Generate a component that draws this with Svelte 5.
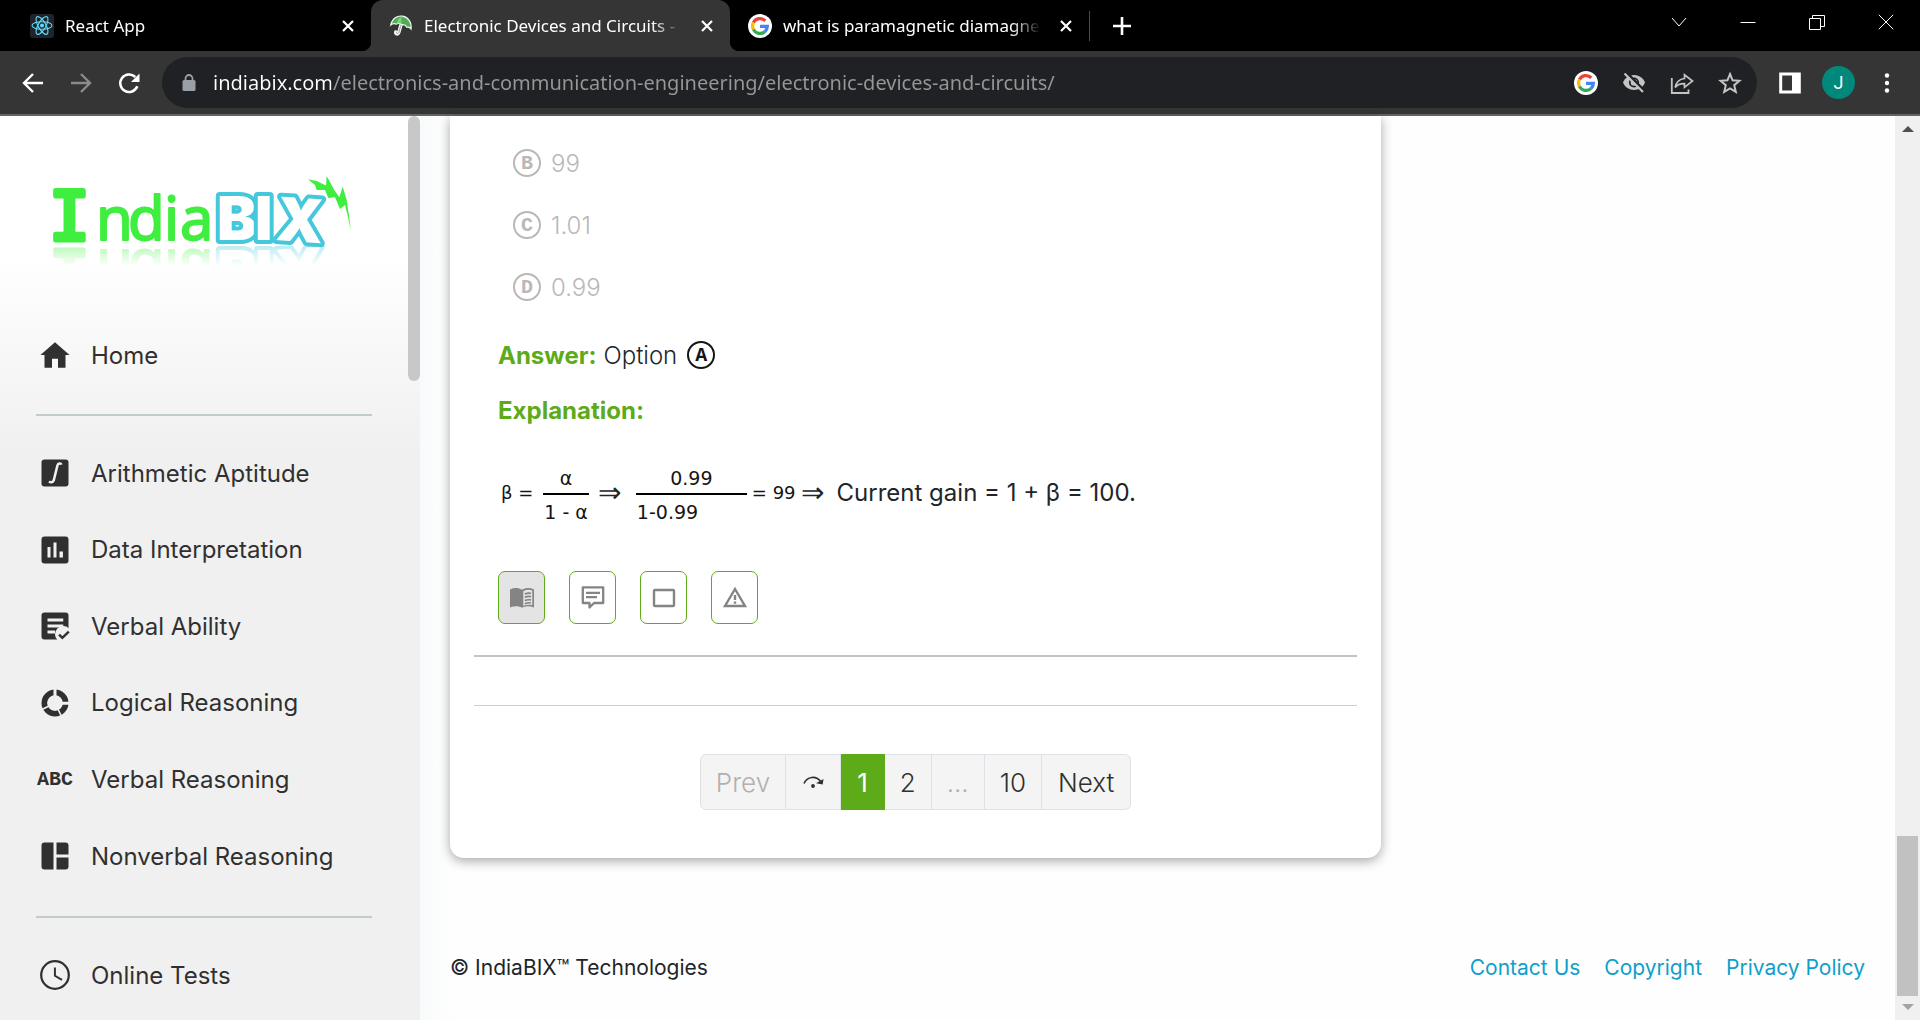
<script>
  const tabs = [
    { icon: 'react', title: 'React App', active: false },
    { icon: 'umbrella', title: 'Electronic Devices and Circuits -', active: true },
    { icon: 'google', title: 'what is paramagnetic diamagnet', active: false },
  ];
  const topics = [
    { icon: 'integral', label: 'Arithmetic Aptitude' },
    { icon: 'chart', label: 'Data Interpretation' },
    { icon: 'check', label: 'Verbal Ability' },
    { icon: 'donut', label: 'Logical Reasoning' },
    { icon: 'abc', label: 'Verbal Reasoning' },
    { icon: 'board', label: 'Nonverbal Reasoning' },
  ];
  const options = [
    { letter: 'B', text: '99' },
    { letter: 'C', text: '1.01' },
    { letter: 'D', text: '0.99' },
  ];
  let address = $state('indiabix.com/electronics-and-communication-engineering/electronic-devices-and-circuits/');
</script>

{#snippet google()}
  <svg class="i24" viewBox="0 0 24 24" aria-hidden="true">
    <circle cx="12" cy="12" r="12" fill="#fff" />
    <g fill="none" stroke-width="3.2">
      <path d="M5.4 8.6A7.4 7.4 0 0 1 17.3 6.8" stroke="#ea4335" />
      <path d="M5.4 15.4A7.4 7.4 0 0 1 5.4 8.6" stroke="#fbbc05" />
      <path d="M17 17.5A7.4 7.4 0 0 1 5.4 15.4" stroke="#34a853" />
      <path d="M12 12.3h7.4a7.4 7.4 0 0 1-2.4 5.2" stroke="#4285f4" />
    </g>
  </svg>
{/snippet}

{#snippet cross()}
  <svg class="i14" viewBox="0 0 14 14" aria-hidden="true"><path d="M2 2l10 10M12 2L2 12" fill="none" stroke="#fff" stroke-width="2.200" /></svg>
{/snippet}

{#snippet topicIcon(name)}
  {#if name === 'abc'}
    <span class="abc" aria-hidden="true">ABC</span>
  {:else}
    <svg class="i36" viewBox="0 0 24 24" aria-hidden="true" fill="#303030">
      {#if name === 'home'}
        <path d="M10 20.500v-6h4v6h5v-8.500h2.700L12 3.500 2.300 12H5v8.500z" />
      {:else if name === 'integral'}
        <rect x="3" y="3" width="18" height="18" rx="2" />
        <path d="M16.300 6.400c-.4-1-2.200-1.100-2.700.6L11.200 16.800c-.5 1.600-2.200 1.600-3.200.8" fill="none" stroke="#f0f0f0" stroke-width="1.700" />
      {:else if name === 'chart'}
        <path d="M19 3H5a2 2 0 0 0-2 2v14a2 2 0 0 0 2 2h14a2 2 0 0 0 2-2V5a2 2 0 0 0-2-2M9 17H7v-7h2zm4 0h-2V7h2zm4.300 0h-2.300v-4h2.300z" fill-rule="evenodd" />
      {:else if name === 'check'}
        <rect x="3" y="3" width="18" height="18" rx="2" />
        <path d="M7 8h10.500M7 12h10.500M7 16h5" stroke="#f0f0f0" stroke-width="2" />
        <circle cx="17.500" cy="17.500" r="5.500" fill="#f0f0f0" />
        <path d="M14.700 17.700l2.200 2.200 4.300-4.200" fill="none" stroke="#303030" stroke-width="1.600" />
      {:else if name === 'donut'}
        <circle cx="12" cy="12" r="7.100" fill="none" stroke="#303030" stroke-width="3.800" />
        <path d="M12 12V2M12 12.200h10" stroke="#f0f0f0" stroke-width="2" />
        <path d="M12 12l4.600 9.500M12 12l-9 4.500" stroke="#f0f0f0" stroke-width="1.100" />
        <circle cx="12" cy="12" r="5" fill="#f0f0f0" />
      {:else if name === 'board'}
        <path d="M5 3h6v18H5a2 2 0 0 1-2-2V5a2 2 0 0 1 2-2M13 3h6a2 2 0 0 1 2 2v6h-8zM13 13h8v6a2 2 0 0 1-2 2h-6z" />
      {:else if name === 'clock'}
        <circle cx="12" cy="12" r="9.200" fill="none" stroke="#303030" stroke-width="1.500" />
        <path d="M11.300 7h1.300v5.200l4.400 2.500-.7 1.100-5-2.900z" />
      {/if}
    </svg>
  {/if}
{/snippet}

<div class="window">
  <div class="tabstrip">
    <div class="tabs">
      {#each tabs as tab}
        <div class="tab" class:active={tab.active}>
          {#if tab.icon === 'react'}
            <svg class="i24" viewBox="0 0 24 24" aria-hidden="true">
              <rect width="24" height="24" rx="3" fill="#20232a" />
              <g fill="none" stroke="#61dafb" stroke-width="1.100">
                <ellipse cx="12" cy="11.500" rx="10" ry="3.800" />
                <ellipse cx="12" cy="11.500" rx="10" ry="3.800" transform="rotate(60 12 11.500)" />
                <ellipse cx="12" cy="11.500" rx="10" ry="3.800" transform="rotate(120 12 11.500)" />
              </g>
              <circle cx="12" cy="11.500" r="2" fill="#61dafb" />
            </svg>
          {:else if tab.icon === 'umbrella'}
            <svg class="i24" viewBox="0 0 24 24" aria-hidden="true">
              <path d="M12.500 9L9.800 18.500c-.9 2.400-3.800 1.600-3.100-.6" fill="none" stroke="#f4f4f4" stroke-width="3.400" stroke-linecap="round" />
              <path d="M12.600 9L9.800 18.500c-.7 1.600-2.600 1.200-2.300-.4" fill="none" stroke="#9aa59a" stroke-width="1" />
              <path d="M1.800 11C3 4.500 8.500 1.200 13.500 2.200 19.500 3.300 23 8.500 22 15c-1-1.600-2.600-2.200-4.200-1.700-1-2-2.700-3-4.700-2.700-1.900-1.500-3.900-1.600-5.800-.5-1.800-.8-3.900-.5-5.500.9z" fill="#4caf50" stroke="#f4f4f4" stroke-width="1.200" />
              <path d="M7.300 10C8 6 10.500 3.500 13.200 2.800c-1.300 2.700-1.200 5-.1 7.800-1.900-1.500-3.900-1.700-5.800-.6z" fill="#7fd07f" />
            </svg>
          {:else}
            {@render google()}
          {/if}
          <span class="title">{tab.title}</span>
          <button class="plain" aria-label="Close tab">{@render cross()}</button>
        </div>
      {/each}
      <span class="tabsep"></span>
      <button class="plain newtab" aria-label="New tab">
        <svg class="i20" viewBox="0 0 20 20" aria-hidden="true"><path d="M10 1v18M1 10h18" stroke="#fff" stroke-width="2.600" /></svg>
      </button>
    </div>
    <div class="controls">
      <button class="plain" aria-label="Search tabs"><svg class="i16" viewBox="0 0 16 16" aria-hidden="true"><path d="M1 4l7 8 7-8" /></svg></button>
      <button class="plain" aria-label="Minimize"><svg class="i16" viewBox="0 0 16 16" aria-hidden="true"><path d="M.5 8.500h15" /></svg></button>
      <button class="plain" aria-label="Restore"><svg class="i16" viewBox="0 0 16 16" aria-hidden="true"><path d="M.5 4.500h11v11H.5zM3.500 4.500v-3h12v11h-4" /></svg></button>
      <button class="plain" aria-label="Close"><svg class="i16" viewBox="0 0 16 16" aria-hidden="true"><path d="M.8.8l14.400 14.400M15.200.8L.8 15.200" /></svg></button>
    </div>
  </div>

  <div class="toolbar">
    <button class="plain" aria-label="Back"><svg class="i24" viewBox="0 0 24 24" aria-hidden="true"><path d="M22 12H3.500M12 3l-9 9 9 9" fill="none" stroke="#fff" stroke-width="2.400" /></svg></button>
    <button class="plain" aria-label="Forward"><svg class="i24" viewBox="0 0 24 24" aria-hidden="true"><path d="M2 12h18.500M12 3l9 9-9 9" fill="none" stroke="#8b8b8b" stroke-width="2.400" /></svg></button>
    <button class="plain" aria-label="Reload"><svg class="i24" viewBox="0 0 24 24" aria-hidden="true"><path d="M20.300 15.300A8.800 8.800 0 1 1 18.300 6" fill="none" stroke="#fff" stroke-width="2.500" /><path d="M22.500 2.500v8.500H14z" fill="#fff" /></svg></button>
    <div class="omnibox">
      <svg class="i20" viewBox="0 0 20 20" aria-hidden="true"><rect x="3.500" y="7" width="13" height="11" rx="1.500" fill="#9aa0a6" /><path d="M6.500 8V5.500a3.500 3.500 0 0 1 7 0V8" fill="none" stroke="#9aa0a6" stroke-width="1.800" /></svg>
      <input aria-label="Address" bind:value={address} />
      <div class="actions">
        <button class="plain" aria-label="Google">{@render google()}</button>
        <button class="plain" aria-label="Tracking protection">
          <svg class="i24" viewBox="0 0 24 24" aria-hidden="true"><path d="M1 11.500C3 6.800 7.200 4 12 4s9 2.800 11 7.500C21 16.200 16.800 19 12 19S3 16.200 1 11.500z" fill="#c4c4c4" /><circle cx="12" cy="11.500" r="4.200" fill="none" stroke="#202124" stroke-width="1.800" /><path d="M4.500 1.500L22.500 20" stroke="#202124" stroke-width="2.600" /><path d="M2.500 2.500l18.500 18.500" stroke="#c4c4c4" stroke-width="2.200" /></svg>
        </button>
        <button class="plain" aria-label="Share">
          <svg class="i24" viewBox="0 0 24 24" aria-hidden="true"><path d="M1.800 7v15h16.700v-3.500" fill="none" stroke="#c4c4c4" stroke-width="1.800" /><path d="M14.500 7.500V3.800L22.500 10l-8 6.300v-3.600c-4-.1-7 .9-9.300 3.800C6 11.800 8.800 8.200 14.500 7.500z" fill="none" stroke="#c4c4c4" stroke-width="1.700" /></svg>
        </button>
        <button class="plain" aria-label="Bookmark">
          <svg class="i24" viewBox="0 0 24 24" aria-hidden="true"><path d="M12 3l2.600 6.300 6.800.5-5.200 4.400 1.600 6.600-5.800-3.500-5.800 3.500 1.600-6.600-5.200-4.400 6.800-.5z" fill="none" stroke="#c4c4c4" stroke-width="2" /></svg>
        </button>
      </div>
    </div>
    <button class="plain" aria-label="Side panel"><svg class="i24" viewBox="0 0 24 24" aria-hidden="true"><path d="M1.200 1.500h21.600v21H1.200zM4.200 4.500v15h9.800v-15z" fill="#fff" fill-rule="evenodd" /></svg></button>
    <button class="plain avatar" aria-label="Profile">J</button>
    <button class="plain" aria-label="Menu"><svg class="i24" viewBox="0 0 24 24" aria-hidden="true" fill="#fff"><circle cx="12" cy="4.500" r="2.200" /><circle cx="12" cy="12" r="2.200" /><circle cx="12" cy="19.500" r="2.200" /></svg></button>
  </div>

  <div class="page">
    <aside class="sidebar">
      <nav>
        <a class="logo" href="#home" aria-label="IndiaBIX">
          <svg viewBox="0 0 310 104" aria-hidden="true">
            <defs>
              <linearGradient id="fade" x1="0" y1="0" x2="0" y2="1">
                <stop offset="0" stop-color="#fff" stop-opacity="0.350" />
                <stop offset="1" stop-color="#fff" stop-opacity="0" />
              </linearGradient>
              <mask id="mirror"><rect x="0" y="76" width="310" height="20" fill="url(#fade)" /></mask>
              <g id="brand">
                <text class="hand" y="70"><tspan class="slab" x="1">I</tspan><tspan x="48">n</tspan><tspan x="80">d</tspan><tspan x="116">i</tspan><tspan x="132">a</tspan></text>
                <text class="block" y="70"><tspan x="169">B</tspan><tspan x="207">I</tspan><tspan x="227" rotate="4">X</tspan></text>
              </g>
            </defs>
            <use href="#brand" />
            <g mask="url(#mirror)"><use href="#brand" transform="matrix(1 0 0 -1 0 150)" /></g>
            <path d="M260 9.300L268.700 11 278 15.500 278.700 6 286.300 20 291.300 27.300 294.700 16.700 298.700 30 302 53 302.700 60 300 47 297 35 292 39 287 27.300 280.300 28 277 20 268.700 20 267 15z" fill="#3fee3f" />
          </svg>
        </a>
        <a class="item" href="#home">{@render topicIcon('home')}Home</a>
        <hr />
        <div class="group">
          {#each topics as topic}
            <a class="item" href="#topic">{@render topicIcon(topic.icon)}{topic.label}</a>
          {/each}
        </div>
        <hr />
        <a class="item" href="#tests">{@render topicIcon('clock')}Online Tests</a>
      </nav>
      <div class="sidebar-track"><div class="sidebar-thumb"></div></div>
    </aside>

    <main>
      <section class="card">
        <ul class="options">
          {#each options as option}
            <li><span class="ring">{option.letter}</span>{option.text}</li>
          {/each}
        </ul>
        <p class="answer"><strong>Answer:</strong> Option <span class="ring">A</span></p>
        <p class="explanation"><strong>Explanation:</strong></p>
        <div class="formula">
          <span class="math">β =</span>
          <span class="frac"><span>α</span><span>1 - α</span></span>
          <span class="arrow">⇒</span>
          <span class="frac wide"><span>0.99</span><span>1-0.99</span></span>
          <span class="math equals">= 99</span>
          <span class="arrow">⇒</span>
          <span class="result">Current gain = 1 + β = 100.</span>
        </div>
        <div class="tools">
          <button class="tool on" aria-label="View answer">
            <svg class="i26" viewBox="0 0 26 26" aria-hidden="true"><path d="M1 4.500C5 2.500 9.500 2.500 13 4.800c3.500-2.300 8-2.300 12-.3v18c-4-1.800-8.500-1.800-12 .2-3.500-2-8-2-12-.2z" fill="#848484" /><path d="M14.300 6.200c2.800-1.600 5.800-1.800 9-.8v14.800c-3.200-.8-6.200-.6-9 .7z" fill="#e4e4e4" /><path d="M15.800 9c2-.9 4-1.100 6.200-.7M15.800 12.300c2-.9 4-1.100 6.200-.7M15.800 15.600c2-.9 4-1.100 6.200-.7M15.800 18.700c2-.9 4-1.100 6.200-.7" fill="none" stroke="#848484" stroke-width="1.600" /></svg>
          </button>
          <button class="tool" aria-label="Discuss">
            <svg class="i26" viewBox="0 0 26 26" aria-hidden="true" fill="none" stroke="#848484" stroke-width="2.300"><path d="M2.800 2.300h20.400v15.700H14l-4.500 4.500V18H2.800z" stroke-linejoin="round" /><path d="M6 7.800h14M6 12.200h11" /></svg>
          </button>
          <button class="tool" aria-label="Workspace">
            <svg class="i26" viewBox="0 0 26 26" aria-hidden="true"><rect x="3" y="5" width="20" height="16" rx="1" fill="none" stroke="#848484" stroke-width="2.400" /></svg>
          </button>
          <button class="tool" aria-label="Report">
            <svg class="i26" viewBox="0 0 26 26" aria-hidden="true" fill="none" stroke="#848484" stroke-width="2.400"><path d="M13 4L23 21H3z" /><path d="M13 10v5M13 16.500v2.300" /></svg>
          </button>
        </div>
        <hr class="thick" />
        <hr class="thin" />
        <nav class="pager" aria-label="Pages">
          <button class="prev" disabled>Prev</button>
          <button class="skip" aria-label="Jump">
            <svg class="i24" viewBox="0 0 24 24" aria-hidden="true"><path d="M3 13.500C6 6.500 15 5 20 12" fill="none" stroke="#303030" stroke-width="1.700" /><path d="M22.500 9l-.8 5.500-6.700-1.300z" fill="#303030" /><circle cx="12" cy="16" r="1.900" fill="#303030" /></svg>
          </button>
          <button class="current" aria-current="page">1</button>
          <button class="two">2</button>
          <button class="dots" disabled>...</button>
          <button class="ten">10</button>
          <button class="next">Next</button>
        </nav>
      </section>
      <footer>
        <span>© IndiaBIX™ Technologies</span>
        <nav class="links">
          <a href="#contact">Contact Us</a>
          <a href="#copyright">Copyright</a>
          <a href="#privacy">Privacy Policy</a>
        </nav>
      </footer>
    </main>

    <div class="scrollbar" aria-hidden="true">
      <svg class="i12" viewBox="0 0 12 12"><path d="M0 9h12L6 3z" fill="#505050" /></svg>
      <span class="thumb"></span>
      <svg class="i12" viewBox="0 0 12 12"><path d="M0 3h12L6 9z" fill="#a3a3a3" /></svg>
    </div>
  </div>
</div>

<style>
  :global(body) { background: #fefefe; }
  .window, .window :global(*) { box-sizing: border-box; }
  .window { display: flex; flex-direction: column; height: 100vh; overflow: hidden; font-family: Inter, "Liberation Sans", sans-serif; color: #212529; }
  svg { display: block; flex: none; }
  .i12 { width: 12px; height: 12px; }
  .i14 { width: 14px; height: 14px; }
  .i16 { width: 16px; height: 16px; }
  .i20 { width: 20px; height: 20px; }
  .i24 { width: 24px; height: 24px; }
  .i26 { width: 26px; height: 26px; }
  .i36 { width: 36px; height: 36px; }
  button { font: inherit; color: inherit; }
  .plain { display: flex; align-items: center; justify-content: center; border: 0; padding: 0; background: none; }
  a { color: inherit; text-decoration: none; }
  p { margin: 0; }

  .tabstrip { display: flex; flex: none; justify-content: space-between; height: 51px; background: #000; color: #fff; font-family: "Noto Sans", "Open Sans", sans-serif; font-size: 17px; }
  .tabs { display: flex; align-items: center; padding-left: 12px; }
  .tab { position: relative; display: flex; align-items: center; width: 359px; height: 51px; padding: 0 16px 0 18px; gap: 11px; }
  .tab.active { background: #353535; border-radius: 12px 12px 0 0; }
  .tab.active::before, .tab.active::after { content: ""; position: absolute; bottom: 0; width: 10px; height: 10px; }
  .tab.active::before { left: -10px; background: radial-gradient(circle at 0 0, #000 10px, #353535 11px); }
  .tab.active::after { right: -10px; background: radial-gradient(circle at 100% 0, #000 10px, #353535 11px); }
  .title { flex: 1; min-width: 0; white-space: nowrap; mask-image: linear-gradient(90deg, #000 228px, transparent 258px); }
  .tabsep { width: 1px; height: 30px; background: #4c4c4c; }
  .newtab { margin-left: 22px; }
  .controls { display: flex; align-items: center; height: 43px; gap: 53px; padding-right: 26px; }
  .controls path { fill: none; stroke: #fff; stroke-width: 1; }

  .toolbar { display: flex; flex: none; align-items: center; height: 65px; gap: 21px; padding: 0 21px; background: #353535; border-bottom: 2px solid #636363; }
  .toolbar > .plain + .plain { margin-left: 3px; }
  .toolbar > .avatar + .plain, .toolbar > .plain + .avatar { margin-left: -1px; }
  .omnibox { display: flex; flex: 1; align-items: center; height: 51px; padding: 0 15px 0 17px; border-radius: 26px; background: #202124; }
  .omnibox input { flex: 1; min-width: 0; height: 40px; margin-left: 14px; padding: 0; border: 0; outline: 0; font: 20px "Noto Sans", "Open Sans", sans-serif; color: transparent; background: linear-gradient(90deg, #fff 118px, #969798 118px); background-clip: text; -webkit-background-clip: text; }
  .actions { display: flex; gap: 24px; }
  .avatar { width: 33px; height: 33px; border-radius: 50%; background: #00897b; color: #fff; font-family: Roboto, sans-serif; font-size: 18px; }

  .page { display: flex; flex: 1; min-height: 0; background: #fefefe; }
  .sidebar { display: flex; flex: none; width: 420px; background: linear-gradient(#fff 140px, #f0f0f0 340px); }
  .sidebar > nav { flex: 1; padding-left: 36px; }
  .sidebar hr { height: 2px; margin: 20px 36px 20px 0; border: 0; background: #c1cacc; }
  .logo { display: block; width: 310px; margin: 54px 0 44px 12px; }
  .logo svg { width: 310px; height: 104px; overflow: visible; }
  .hand { font: 400 60px "Open Sans", sans-serif; fill: #3fee3f; stroke: #3fee3f; stroke-width: 2; stroke-linejoin: round; }
  .slab { font: 400 68px "DejaVu Sans Mono", monospace; stroke-width: 5; }
  .block { font: 900 60px Inter, sans-serif; fill: #fff; stroke: #45c8dc; stroke-width: 8; stroke-linejoin: round; paint-order: stroke; }
  .item { display: flex; align-items: center; height: 76px; padding: 0 0 2px 1px; gap: 18px; color: #303030; font-size: 24px; white-space: nowrap; }
  .group { display: grid; grid-auto-rows: 1fr; height: 460px; }
  .abc { width: 36px; font: 700 20px "Liberation Mono", monospace; text-align: center; }
  .sidebar-track { flex: none; width: 12px; }
  .sidebar-thumb { height: 265px; border-radius: 6px; background: #c8c8c8; }

  main { display: flex; flex: 1; flex-direction: column; min-width: 0; padding: 0 30px; background: linear-gradient(90deg, #f8fafb, #fefefe 30px); }
  .card { flex: none; width: 65.8%; padding: 16px 24px 48px; border-radius: 0 0 14px 14px; background: #fff; box-shadow: 0 3px 12px rgba(0, 0, 0, 0.350); font-size: 24px; font-weight: 300; }
  .options { margin: 0; padding: 0 0 0 39px; list-style: none; color: #b8b8b8; }
  .options li { display: flex; align-items: center; height: 62px; gap: 10px; }
  .ring { display: inline-flex; align-items: center; justify-content: center; width: 28px; height: 28px; border: 2px solid currentColor; border-radius: 50%; font: 700 20px "Liberation Mono", monospace; }
  .answer, .explanation { display: flex; align-items: center; height: 40px; margin-left: 24px; padding-bottom: 2px; gap: 7px; }
  .answer { margin-top: 18px; }
  .explanation { margin-top: 15px; }
  .answer .ring { margin-left: 3px; color: #151515; }
  strong { color: #5eab1a; font-weight: 700; }
  .formula { display: flex; align-items: center; margin: 29px 0 0 27px; height: 68px; white-space: nowrap; }
  .math, .frac { font-family: "DejaVu Sans", sans-serif; font-size: 18px; font-weight: 400; color: #151515; }
  .math, .arrow, .result { padding-bottom: 4px; }
  .frac { display: flex; flex-direction: column; margin: 2px 0 0 10px; font-size: 19px; text-align: center; }
  .frac span { height: 34px; padding: 0 1px; line-height: 34px; }
  .frac span:first-child { border-bottom: 2px solid #000; }
  .wide { width: 111px; }
  .wide span:last-child { text-align: left; }
  .equals { margin-left: 5px; }
  .arrow { width: 28px; margin-left: 9px; font: 28px "Liberation Serif", serif; }
  .equals + .arrow { margin-left: 5px; }
  .result { margin-left: 8px; font-weight: 400; }
  .tools { display: flex; gap: 24px; margin: 43px 0 0 24px; }
  .tool { display: flex; align-items: center; justify-content: center; width: 47px; height: 53px; padding: 0; border: 1px solid #5eab1a; border-radius: 7px; background: #fff; }
  .on { background: #e4e4e4; }
  .card hr { border: 0; }
  .thick { height: 2px; margin: 31px 0 0; background: #c4c4c4; }
  .thin { height: 1px; margin: 48px 0 0; background: #cfcfcf; }
  .pager { display: flex; justify-content: center; height: 56px; margin-top: 48px; }
  .pager button { display: flex; align-items: center; justify-content: center; padding: 0 15px; border: 1px solid #dee2e6; border-left-width: 0; background: #f4f4f4; color: #303030; font-size: 26px; }
  .pager button:disabled { color: #b0b0b0; }
  .pager .prev { border-left-width: 1px; border-radius: 6px 0 0 6px; }
  .pager .next { padding: 0 16px; border-radius: 0 6px 6px 0; }
  .pager .current { padding: 0 16px; border-color: #5eab1a; background: #5eab1a; color: #fff; font-weight: 400; }
  footer { display: flex; flex: 1; align-items: center; justify-content: space-between; padding-top: 56px; font-size: 21px; }
  .links { display: flex; gap: 24px; color: #0f9fcb; }

  .scrollbar { display: flex; flex: none; flex-direction: column; align-items: center; width: 25px; padding: 7px 0; background: #f0f0f0; }
  .thumb { width: 21px; height: 160px; margin: auto 0 5px; background: #c1c1c1; }
</style>
